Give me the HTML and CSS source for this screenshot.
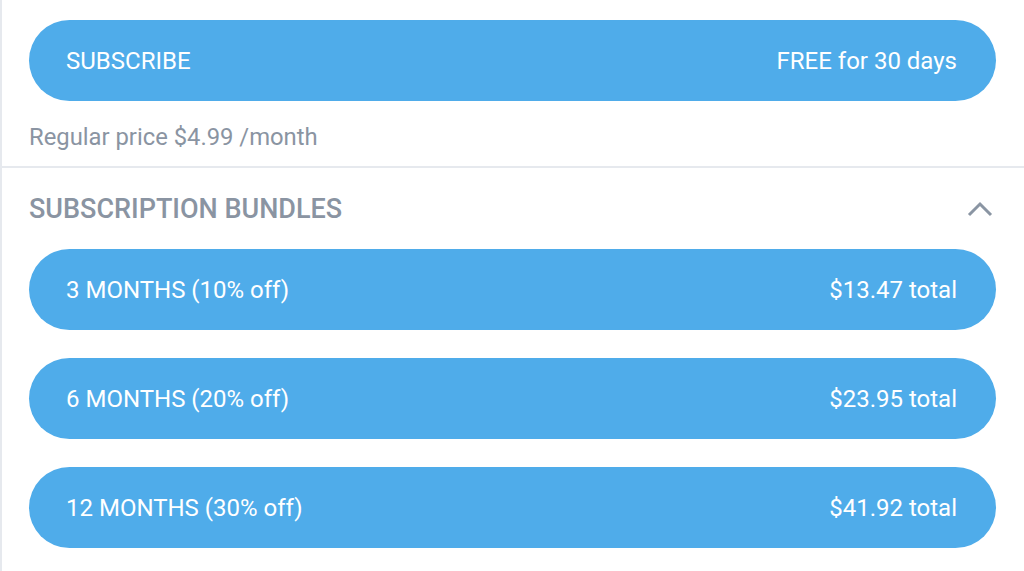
FILE: index.html
```html
<!DOCTYPE html>
<html>
<head>
<meta charset="utf-8">
<link rel="stylesheet" href="styles.css">
</head>
<body>
<div class="panel">
  <section class="top">
    <button class="pill">
      <span>SUBSCRIBE</span>
      <span>FREE for 30 days</span>
    </button>
    <p class="regular">Regular price $4.99 /month</p>
  </section>
  <section class="bundles">
    <div class="bundles-head">
      <h2>SUBSCRIPTION BUNDLES</h2>
      <svg class="chev" width="26" height="16" viewBox="0 0 26 16"><path d="M2 14 L13 3 L24 14" fill="none" stroke="#8a95a3" stroke-width="3"/></svg>
    </div>
    <div class="list">
      <button class="pill"><span>3 MONTHS (10% off)</span><span>$13.47 total</span></button>
      <button class="pill"><span>6 MONTHS (20% off)</span><span>$23.95 total</span></button>
      <button class="pill"><span>12 MONTHS (30% off)</span><span>$41.92 total</span></button>
    </div>
  </section>
</div>
</body>
</html>
```

FILE: styles.css
```css
html, body {
  margin: 0;
  padding: 0;
  background: #fff;
}
body {
  font-family: Roboto, "Liberation Sans", sans-serif;
}
.panel {
  border-left: 2px solid #e6e9ee;
  min-height: 571px;
  box-sizing: border-box;
}
.top {
  padding: 20px 28px 0 27px;
  height: 168px;
  box-sizing: border-box;
  border-bottom: 2px solid #e6e9ee;
}
.pill {
  display: flex;
  justify-content: space-between;
  align-items: center;
  width: 100%;
  height: 81px;
  border: none;
  border-radius: 41px;
  background: #4facea;
  color: #fff;
  font-family: Roboto, "Liberation Sans", sans-serif;
  font-size: 24px;
  padding: 0 39px 0 37px;
  box-sizing: border-box;
  margin: 0;
}
.regular {
  margin: 0;
  padding-top: 21px;
  font-size: 23.8px;
  line-height: 30px;
  color: #8a94a2;
}
.bundles {
  padding: 0 28px 0 27px;
}
.bundles-head {
  display: flex;
  justify-content: space-between;
  align-items: center;
  height: 81px;
}
.bundles-head h2 {
  margin: 0;
  font-weight: 500;
  font-size: 27px;
  color: #8a94a2;
}
.chev {
  margin-right: 3px;
}
.list {
  display: flex;
  flex-direction: column;
  gap: 28px;
}
```
